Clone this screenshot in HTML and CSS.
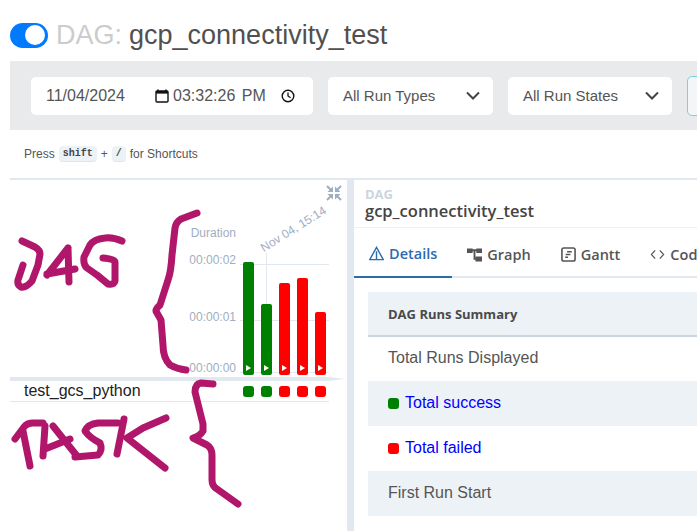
FILE: index.html
```html
<!DOCTYPE html>
<html lang="en">
<head>
    <meta charset="UTF-8">
    <meta name="viewport" content="width=device-width, initial-scale=1.0">
    <title>DAG: gcp_connectivity_test</title>
    <link rel="stylesheet" href="styles.css">
</head>
<body>
    <div class="page">
        <h1 class="page-title">
            <span class="toggle"><span class="toggle-knob"></span></span>
            <span class="title-label">DAG:</span>
            <span class="title-name">gcp_connectivity_test</span>
        </h1>

        <div class="toolbar">
            <div class="field date-field">
                <span class="date-value">11/04/2024</span>
                <svg class="field-icon" viewBox="0 0 14 14"><path d="M3 0.5v2M11 0.5v2" stroke="#111" stroke-width="1.6"/><rect x="1" y="2" width="12" height="11" rx="1" fill="none" stroke="#111" stroke-width="1.4"/><rect x="1" y="2" width="12" height="2.6" fill="#111"/></svg>
                <span class="time-value">03:32:26 <span class="meridiem">PM</span></span>
                <svg class="field-icon clock-icon" viewBox="0 0 14 14"><circle cx="7" cy="7" r="5.8" fill="none" stroke="#111" stroke-width="1.4"/><path d="M7 3.5V7l2.6 1.7" fill="none" stroke="#111" stroke-width="1.3"/></svg>
            </div>
            <div class="field select-field types-field">
                <span>All Run Types</span>
                <svg class="chevron" viewBox="0 0 14 9"><path d="M1 1.5l6 6 6-6" fill="none" stroke="#444" stroke-width="2"/></svg>
            </div>
            <div class="field select-field states-field">
                <span>All Run States</span>
                <svg class="chevron" viewBox="0 0 14 9"><path d="M1 1.5l6 6 6-6" fill="none" stroke="#444" stroke-width="2"/></svg>
            </div>
            <div class="clear-button"></div>
        </div>

        <div class="shortcuts">
            Press <kbd>shift</kbd> + <kbd>/</kbd> for Shortcuts
        </div>

        <div class="main">
            <div class="grid-panel">
                <svg class="collapse-icon" viewBox="0 0 16 16"><path d="M1 1l4.5 4.5M15 1l-4.5 4.5M1 15l4.5-4.5M15 15l-4.5-4.5" stroke="#a0aec0" stroke-width="2"/><path d="M1.5 7h5.5V1.5zM14.5 7H9V1.5zM1.500 9H7v5.500zM14.500 9H9v5.500z" fill="#a0aec0"/></svg>

                <div class="chart">
                    <div class="y-axis">
                        <span>Duration</span>
                        <span>00:00:02</span>
                        <span>00:00:01</span>
                        <span>00:00:00</span>
                    </div>
                    <div class="plot">
                        <div class="grid-line line-top"></div>
                        <div class="grid-line line-mid"></div>
                        <div class="grid-line line-bottom"></div>
                        <div class="run-marker"></div>
                        <div class="run-date">Nov 04, 15:14</div>
                        <div class="bars">
                            <div class="bar success" style="height: 113px"><i></i></div>
                            <div class="bar success" style="height: 71px"><i></i></div>
                            <div class="bar failed" style="height: 92px"><i></i></div>
                            <div class="bar failed" style="height: 97px"><i></i></div>
                            <div class="bar failed" style="height: 63px"><i></i></div>
                        </div>
                    </div>
                </div>

                <div class="band"></div>

                <div class="task-row">
                    <span class="task-name">test_gcs_python</span>
                    <div class="task-cells">
                        <span class="cell success"></span>
                        <span class="cell success"></span>
                        <span class="cell failed"></span>
                        <span class="cell failed"></span>
                        <span class="cell failed"></span>
                    </div>
                </div>
            </div>

            <div class="splitter"></div>

            <div class="details-panel">
                <div class="details-head">
                    <div class="head-label">DAG</div>
                    <div class="head-name">gcp_connectivity_test</div>
                </div>

                <div class="tabs">
                    <div class="tab active">
                        <svg class="tab-icon" viewBox="0 0 16 16"><path d="M8 1.500L15.200 14.500H0.800zM8 5.500v9" fill="none" stroke="#2b6cb0" stroke-width="1.500"/></svg>
                        Details
                    </div>
                    <div class="tab">
                        <svg class="tab-icon" viewBox="0 0 16 16"><path d="M0 1.500h6v5H0zM10 1.500h6v5h-6zM9 10h7v5.500H9z" fill="#555"/><path d="M5 3.500h6M8 3.500v9h2" fill="none" stroke="#555" stroke-width="2"/></svg>
                        Graph
                    </div>
                    <div class="tab">
                        <svg class="tab-icon" viewBox="0 0 16 16"><rect x="1" y="1" width="14" height="14" rx="2" fill="none" stroke="#555" stroke-width="1.700"/><path d="M6.500 5h5M5 8h5M4.500 11h3" stroke="#555" stroke-width="1.600"/></svg>
                        Gantt
                    </div>
                    <div class="tab">
                        <svg class="tab-icon" viewBox="0 0 16 16"><path d="M5.500 3.500L1.500 8l4 4.500M10.500 3.500l4 4.500-4 4.500" fill="none" stroke="#555" stroke-width="1.300"/></svg>
                        Code
                    </div>
                </div>

                <table class="summary">
                    <thead>
                        <tr><th>DAG Runs Summary</th></tr>
                    </thead>
                    <tbody>
                        <tr><td>Total Runs Displayed</td></tr>
                        <tr class="shaded"><td><span class="cell success"></span><a href="#">Total success</a></td></tr>
                        <tr><td><span class="cell failed"></span><a href="#">Total failed</a></td></tr>
                        <tr class="shaded"><td>First Run Start</td></tr>
                    </tbody>
                </table>
            </div>
        </div>

        <!-- pen annotations drawn over the screenshot -->
        <svg class="ink" viewBox="0 0 697 531">
            <path d="M22 241L35 247Q40 250 40 254L38 265L32 281Q26 288 21 287Q17 285 18 280L23 265"/>
            <path d="M68 248L47 275M47 274L75 269M68 248L69 282"/>
            <path d="M122 241Q113 237 105 238Q94 239 90 245L84 257Q83 265 87 268L97 275L108 284Q114 285 115 281V262Q115 259 103 258"/>
            <path d="M197 213L181 219Q176 222 175 228L172 255Q171 272 168 280L160 305Q154 310 157 313L161 320L163 345Q163 358 170 365Q177 369 186 370"/>
            <path d="M15 439L24 427Q27 423 33 423L43 423M23 431L30 466"/>
            <path d="M45 426L43 456M53 426L77 456M45 449L70 439"/>
            <path d="M118 423L98 423Q88 424 85 431Q90 438 100 443Q103 450 98 455L75 457"/>
            <path d="M124 419L117 454M166 418L143 428L127 438L165 468"/>
            <path d="M213 384L201 383Q195 384 195 392L203 424V431Q200 436 193 438L207 445Q212 448 212 455V480Q212 486 217 489L238 504"/>
        </svg>
    </div>
</body>
</html>
```

FILE: styles.css
```css
body {
    font-family: "Liberation Sans", Arial, sans-serif;
    margin: 0;
    color: #555;
    overflow: hidden;
}
.page {
    position: relative;
    width: 697px;
    height: 531px;
    padding-left: 10px;
    box-sizing: border-box;
    overflow: hidden;
}

/* title */
.page-title {
    display: flex;
    align-items: center;
    height: 61px;
    margin: 0;
    padding-top: 9px;
    box-sizing: border-box;
    font-size: 27px;
    font-weight: 400;
    white-space: nowrap;
}
.toggle {
    display: flex;
    justify-content: flex-end;
    align-items: center;
    width: 38px;
    height: 25px;
    padding: 0 3px;
    box-sizing: border-box;
    margin-right: 8px;
    border-radius: 13px;
    background-color: #007bff;
}
.toggle-knob {
    width: 20px;
    height: 20px;
    border-radius: 50%;
    background-color: #fff;
}
.title-label {
    color: #ccc;
    margin-right: 7px;
}
.title-name {
    color: #51504f;
}

/* filter bar */
.toolbar {
    display: flex;
    align-items: center;
    gap: 15px;
    height: 69px;
    width: 687px;
    padding-left: 21px;
    box-sizing: border-box;
    background-color: #e9eaec;
    overflow: hidden;
}
.field {
    display: flex;
    align-items: center;
    flex-shrink: 0;
    height: 38px;
    box-sizing: border-box;
    border-radius: 5px;
    background-color: #fff;
    font-size: 15px;
    color: #555;
}
.date-field {
    width: 282px;
    padding-left: 15px;
}
.date-value {
    width: 109px;
    font-size: 16px;
}
.time-value {
    width: 94px;
    margin-left: 4px;
    font-size: 16px;
    white-space: nowrap;
}
.meridiem {
    margin-left: 2px;
}
.field-icon {
    width: 14px;
    height: 14px;
}
.clock-icon {
    margin-left: 14px;
}
.select-field {
    justify-content: space-between;
    padding: 0 13px 0 15px;
}
.types-field {
    width: 165px;
}
.states-field {
    width: 164px;
}
.chevron {
    width: 14px;
    height: 9px;
}
.clear-button {
    flex-shrink: 0;
    width: 40px;
    height: 40px;
    box-sizing: border-box;
    border: 1px solid #7fcfdc;
    border-radius: 5px;
    background-color: #f3f5f6;
}

/* shortcuts hint */
.shortcuts {
    display: flex;
    align-items: center;
    gap: 4px;
    height: 48px;
    padding-left: 14px;
    font-size: 12px;
    color: #555;
}
.shortcuts kbd {
    padding: 0 4px;
    height: 15px;
    line-height: 15px;
    border-radius: 4px;
    background-color: #edf2f7;
    border-bottom: 1px solid #dfe5ec;
    font-family: "Liberation Mono", monospace;
    font-size: 10px;
    font-weight: 700;
    color: #444;
}

/* main split */
.main {
    display: flex;
    height: 353px;
    border-top: 2px solid #e2e8f0;
}
.grid-panel {
    position: relative;
    flex: 0 0 337px;
}
.splitter {
    flex: 0 0 7px;
    background-color: #e2e8f0;
}
.details-panel {
    flex: 1;
    min-width: 0;
    overflow: hidden;
}

/* duration chart */
.collapse-icon {
    position: absolute;
    top: 5px;
    left: 316px;
    width: 16px;
    height: 16px;
}
.chart {
    display: flex;
    height: 197px;
}
.y-axis {
    display: grid;
    grid-template-rows: 27px 57px 51px 14px;
    justify-items: end;
    box-sizing: border-box;
    width: 226px;
    padding-top: 46px;
    font-size: 12px;
    line-height: 14px;
    color: #a0aec0;
}
.plot {
    position: relative;
    width: 89px;
    margin-left: 4px;
}
.grid-line {
    position: absolute;
    left: 0;
    right: 0;
    height: 1px;
    background-color: #e2e8f0;
}
.line-top {
    top: 84px;
}
.line-mid {
    top: 140px;
}
.line-bottom {
    top: 192px;
}
.run-marker {
    position: absolute;
    top: 73px;
    left: 26px;
    width: 1px;
    height: 52px;
    background-color: #e2e8f0;
}
.run-date {
    position: absolute;
    top: 42px;
    left: 16px;
    font-size: 12px;
    color: #a0aec0;
    white-space: nowrap;
    transform: rotate(-32deg);
}
.bars {
    position: relative;
    display: flex;
    align-items: flex-end;
    gap: 7px;
    height: 195px;
    padding-left: 3px;
}
.bar {
    display: flex;
    justify-content: center;
    align-items: flex-end;
    width: 11px;
    padding-bottom: 4px;
    box-sizing: border-box;
    border-radius: 2px;
}
.bar i {
    border-left: 5px solid #fff;
    border-top: 3px solid transparent;
    border-bottom: 3px solid transparent;
}
.success {
    background-color: #008000;
}
.failed {
    background-color: #f00;
}

/* task rows */
.band {
    width: 335px;
    height: 4px;
    background-color: #e2e8f0;
    clip-path: polygon(0 0, 95% 0, 100% 50%, 95% 100%, 0 100%);
}
.task-row {
    display: flex;
    align-items: center;
    justify-content: space-between;
    width: 319px;
    height: 21px;
    box-sizing: border-box;
    padding: 0 3px 0 14px;
    border-bottom: 1px solid #e2e8f0;
    font-size: 16px;
    color: #222;
}
.task-cells {
    display: flex;
    gap: 7px;
}
.cell {
    display: inline-block;
    width: 11px;
    height: 11px;
    border-radius: 3px;
}

/* details */
.details-head {
    height: 48px;
    padding: 7px 0 0 11px;
    box-sizing: border-box;
    border-bottom: 1px solid #edf2f7;
    font-family: "Open Sans", sans-serif;
}
.head-label {
    font-size: 13px;
    line-height: 15px;
    font-weight: 700;
    color: #cbd5e0;
}
.head-name {
    font-size: 16.5px;
    line-height: 18px;
    font-weight: 600;
    color: #444;
    white-space: nowrap;
}
.tabs {
    display: flex;
    height: 50px;
    box-sizing: border-box;
    border-bottom: 2px solid #e2e8f0;
    font-family: "Open Sans", sans-serif;
    font-size: 14.5px;
    font-weight: 600;
    color: #555;
}
.tab {
    display: flex;
    align-items: center;
    gap: 5px;
    height: 50px;
    padding: 3px 15px 0;
    box-sizing: border-box;
    white-space: nowrap;
}
.tab.active {
    color: #2b6cb0;
    border-bottom: 2px solid #2b6cb0;
}
.tab-icon {
    width: 15px;
    height: 15px;
}

.summary {
    border-collapse: collapse;
    width: 329px;
    margin: 14px 0 0 14px;
}
.summary th {
    height: 44px;
    padding: 0 20px;
    box-sizing: border-box;
    background-color: #edf2f7;
    border-bottom: 2px solid #cbd5e0;
    text-align: left;
    font-family: "Open Sans", sans-serif;
    font-size: 13px;
    font-weight: 700;
    color: #4a4a4a;
}
.summary td {
    height: 45px;
    padding: 0 20px 2px;
    box-sizing: border-box;
    font-size: 16px;
    color: #555;
}
.summary .shaded td {
    background-color: #edf2f7;
}
.summary .cell {
    margin-right: 6px;
    vertical-align: -1px;
}
.summary a {
    color: #00f;
    text-decoration: none;
}

/* annotations */
.ink {
    position: absolute;
    top: 0;
    left: 0;
    width: 697px;
    height: 531px;
    pointer-events: none;
    fill: none;
    stroke: #b0176b;
    stroke-width: 7;
    stroke-linecap: round;
    stroke-linejoin: round;
}
```
